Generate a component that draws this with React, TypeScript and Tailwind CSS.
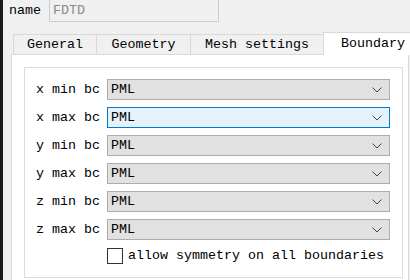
import React from 'react'

const rows = ['x min bc', 'x max bc', 'y min bc', 'y max bc', 'z min bc', 'z max bc']
const tabs = [
  { label: 'General', cls: 'w-[83px]' },
  { label: 'Geometry', cls: 'w-[94px]' },
  { label: 'Mesh settings', cls: 'w-[133px]' },
]

function Chevron() {
  return (
    <svg width="10" height="6" viewBox="0 0 10 6" className="shrink-0">
      <path d="M0.5 0.5 L5 5 L9.5 0.5" fill="none" stroke="#444" strokeWidth="1" />
    </svg>
  )
}

function Combo({ focused }: { focused?: boolean }) {
  return (
    <div
      className={
        focused
          ? 'w-[283px] h-[21px] flex items-center justify-between pl-[3px] pr-[7px] border border-[#0078d7] bg-[#e5f1fb]'
          : 'w-[283px] h-[21px] flex items-center justify-between pl-[3px] pr-[7px] border border-[#adadad] bg-[#e1e1e1]'
      }
    >
      <span>PML</span>
      <Chevron />
    </div>
  )
}

export default function App() {
  return (
    <div
      className="w-[410px] h-[280px] overflow-hidden bg-[#f0f0f0] border-l-[3px] border-[#1a1a1a] text-[13.33px] leading-none text-black"
      style={{ fontFamily: '"Liberation Mono", monospace' }}
    >
      <div className="h-[22px] flex items-center">
        <span className="ml-[6px] w-[40px]">name</span>
        <div className="h-[23px] -mt-[1px] w-[170px] border border-[#cccccc] bg-[#f0f0f0] flex items-center pl-[3px] text-[#8a8a8a]">
          FDTD
        </div>
      </div>

      <div className="mt-[9px] ml-[10px] flex items-end h-[23px]">
        {tabs.map(t => (
          <div
            key={t.label}
            className={`${t.cls} shrink-0 h-[20px] flex items-center justify-center border border-b-0 border-r-0 border-[#d9d9d9] bg-[#f0f0f0]`}
          >
            {t.label}
          </div>
        ))}
        <div className="h-[23px] w-[100px] shrink-0 relative z-10 -mb-[1px] flex items-center pl-[17px] border border-b-0 border-[#d9d9d9] bg-white">
          Boundary
        </div>
      </div>

      <div className="ml-[8px] w-[398px] h-[240px] border border-[#d9d9d9] bg-white pt-[12px] pl-[12px]">
        <div className="w-[379px] h-[211px] border border-[#dcdcdc] pt-[11px] pl-[11px]">
          <div className="flex flex-col gap-[7px]">
            {rows.map((r, i) => (
              <div key={r} className="flex items-center h-[21px]">
                <span className="w-[71px]">{r}</span>
                <Combo focused={i === 1} />
              </div>
            ))}
          </div>
          <div className="mt-[8px] ml-[71px] flex items-center h-[16px]">
            <div className="w-[16px] h-[16px] border border-[#333] bg-white" />
            <span className="ml-[5px]">allow symmetry on all boundaries</span>
          </div>
        </div>
      </div>
    </div>
  )
}
